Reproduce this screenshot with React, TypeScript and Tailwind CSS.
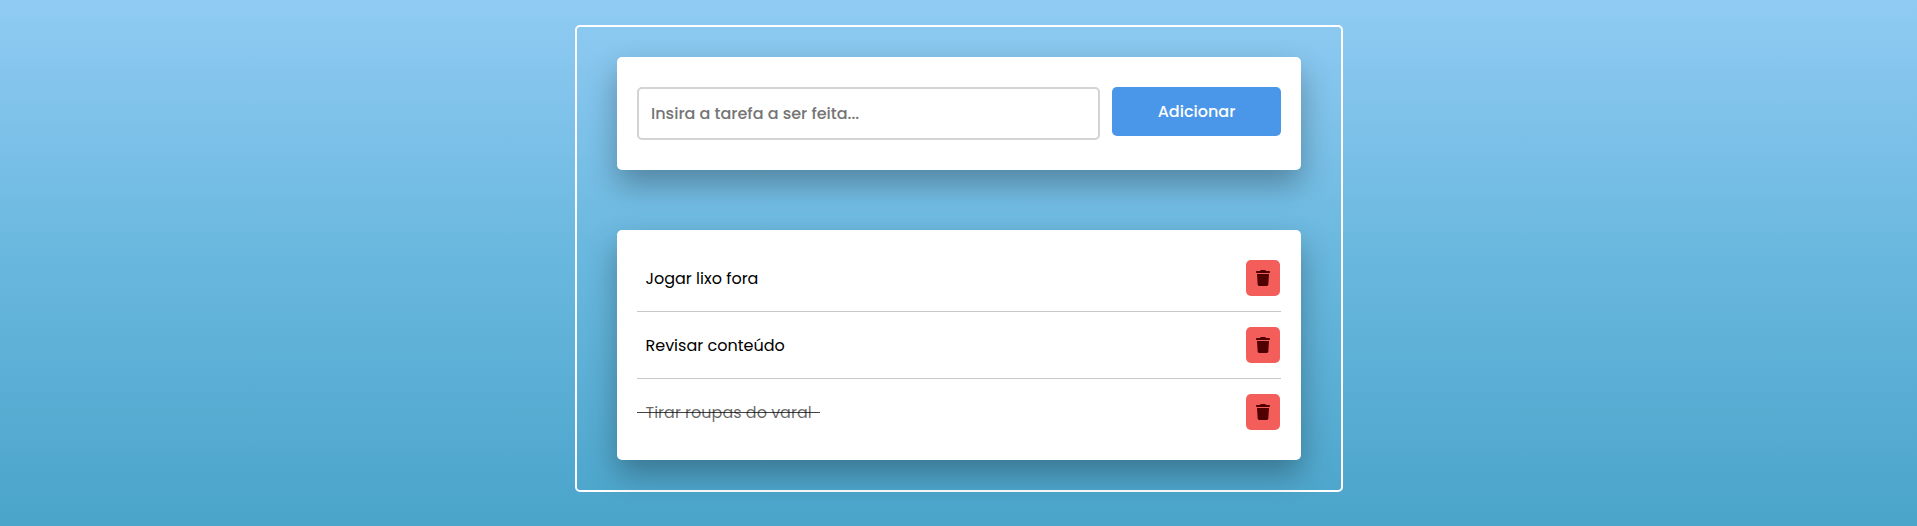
import React from "react";
import { FaTrash } from "react-icons/fa6";

const tasks = [
  { text: "Jogar lixo fora", done: false },
  { text: "Revisar conteúdo", done: false },
  { text: "Tirar roupas do varal", done: true },
];

const card = "rounded-[5px] bg-white px-5 shadow-[0_14px_30px_rgba(0,0,0,0.3)]";

export default function App() {
  return (
    <div className="flex h-[526px] w-full justify-center bg-linear-to-b from-[#90cbf3] via-[#68b7de] to-[#4aa4ca] pt-[25px] font-[Poppins,Inter,sans-serif] text-base">
      <main className="flex h-[467px] w-[768px] flex-col gap-[60px] rounded-[5px] border-2 border-white px-10 pt-[30px]">
        <form className={`${card} flex h-[113px] shrink-0 items-start gap-3 pt-[30px]`}>
          <input
            className="h-[53px] w-[463px] rounded-[5px] border-2 border-[#d3d3d3] pr-3 pl-[12.5px] font-medium outline-none placeholder:text-[#757575]"
            placeholder="Insira a tarefa a ser feita..."
          />
          <button type="button" className="h-[49px] w-[169px] rounded-[5px] bg-[#4a96e8] pl-px font-medium text-white">
            Adicionar
          </button>
        </form>
        <ul className={`${card} h-[230px] shrink-0 py-[15px]`}>
          {tasks.map((t) => (
            <li
              key={t.text}
              className="flex h-[67px] items-center justify-between border-b border-[#c8c8c8] pr-px last:border-transparent"
            >
              <span className={`pt-px pr-2 pl-[9px] ${t.done ? "bg-[linear-gradient(#444,#444)] bg-size-[100%_1px] bg-center bg-no-repeat text-black/60" : "text-black"}`}>
                {t.text}
              </span>
              <button type="button" className="flex h-9 w-[34px] items-center justify-center rounded-[5px] bg-[#f35e5b] text-[#500000]">
                <FaTrash size={16} />
              </button>
            </li>
          ))}
        </ul>
      </main>
    </div>
  );
}
